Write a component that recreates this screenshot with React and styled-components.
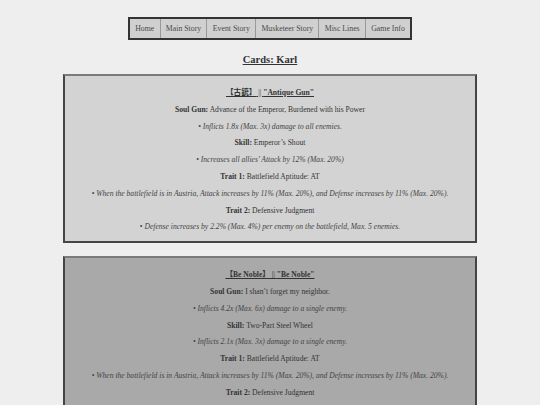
import React from 'react';
import styled, { createGlobalStyle } from 'styled-components';

const GlobalStyle = createGlobalStyle`
  html, body {
    margin: 0;
    padding: 0;
    background: #eeeeee;
  }
  body {
    font-family: "Liberation Serif", "Noto Sans CJK JP", serif;
    font-size: 7.6px;
    color: #333333;
  }
`;

const Page = styled.div`
  display: flex;
  flex-direction: column;
  align-items: center;
  padding-top: 17px;
`;

const NavBar = styled.nav`
  display: flex;
  border: 2px solid #333333;
  background: #d0d0d0;
`;

const NavItem = styled.a`
  display: block;
  padding: 5px 5.3px;
  font-size: 7.8px;
  line-height: 9px;
  color: #4a4a4a;
  text-decoration: none;
  border-left: 1px solid #999999;
  &:first-child {
    border-left: none;
  }
`;

const PageTitle = styled.h2`
  margin: 14px 0 8px;
  font-size: 10.5px;
  line-height: 12px;
  font-weight: bold;
  text-decoration: underline;
  color: #333333;
`;

const Card = styled.section`
  width: 410px;
  padding: 4px 0 2px;
  margin-bottom: 13px;
  background: ${p => p.$bg};
  border: 2px solid #444444;
  border-top-color: #7a7a7a;
  text-align: center;
`;

const CardTitle = styled.p`
  margin: 8px 0 7.8px;
  line-height: 9px;
  text-decoration: underline;
  font-weight: bold;
  color: #333333;
`;

const Sep = styled.span`
  font-weight: normal;
`;

const Line = styled.p`
  margin: 7.8px 0;
  line-height: 9px;
  color: #333333;
`;

const Desc = styled(Line)`
  font-style: italic;
  color: #444444;
`;

const cards = [
  {
    bg: '#d3d3d3',
    jp: '【古銃】',
    en: '"Antique Gun"',
    soul: 'Advance of the Emperor, Burdened with his Power',
    soulDesc: 'Inflicts 1.8x (Max. 3x) damage to all enemies.',
    skill: 'Emperor’s Shout',
    skillDesc: 'Increases all allies’ Attack by 12% (Max. 20%)',
  },
  {
    bg: '#a9a9a9',
    jp: '【Be Noble】',
    en: '"Be Noble"',
    soul: 'I shan’t forget my neighbor.',
    soulDesc: 'Inflicts 4.2x (Max. 6x) damage to a single enemy.',
    skill: 'Two-Part Steel Wheel',
    skillDesc: 'Inflicts 2.1x (Max. 3x) damage to a single enemy.',
  },
];

const navLinks = ['Home', 'Main Story', 'Event Story', 'Musketeer Story', 'Misc Lines', 'Game Info'];

const App = () => {
  return (
    <Page>
      <GlobalStyle />
      <NavBar>
        {navLinks.map(l => (
          <NavItem key={l} href="#">{l}</NavItem>
        ))}
      </NavBar>
      <PageTitle>Cards: Karl</PageTitle>
      {cards.map(c => (
        <Card key={c.en} $bg={c.bg}>
          <CardTitle>
            {c.jp}<Sep> || </Sep>{c.en}
          </CardTitle>
          <Line><b>Soul Gun:</b> {c.soul}</Line>
          <Desc>• {c.soulDesc}</Desc>
          <Line><b>Skill:</b> {c.skill}</Line>
          <Desc>• {c.skillDesc}</Desc>
          <Line><b>Trait 1:</b> Battlefield Aptitude: AT</Line>
          <Desc>• When the battlefield is in Austria, Attack increases by 11% (Max. 20%), and Defense increases by 11% (Max. 20%).</Desc>
          <Line><b>Trait 2:</b> Defensive Judgment</Line>
          <Desc>• Defense increases by 2.2% (Max. 4%) per enemy on the battlefield, Max. 5 enemies.</Desc>
        </Card>
      ))}
    </Page>
  );
};

export default App;
